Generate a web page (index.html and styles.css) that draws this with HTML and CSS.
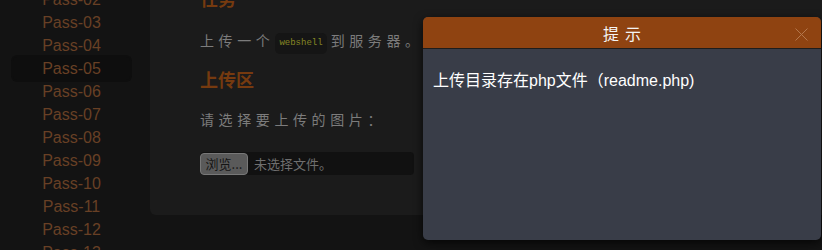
FILE: index.html
```html
<!DOCTYPE html>
<html lang="zh-CN">
<head>
<meta charset="utf-8">
<title>Upload</title>
<link rel="stylesheet" href="styles.css">
</head>
<body>
<div class="page">
  <ul class="menu">
    <li class="item">Pass-01</li>
    <li class="item">Pass-02</li>
    <li class="item">Pass-03</li>
    <li class="item">Pass-04</li>
    <li class="item active">Pass-05</li>
    <li class="item">Pass-06</li>
    <li class="item">Pass-07</li>
    <li class="item">Pass-08</li>
    <li class="item">Pass-09</li>
    <li class="item">Pass-10</li>
    <li class="item">Pass-11</li>
    <li class="item">Pass-12</li>
    <li class="item">Pass-13</li>
  </ul>
  <main class="panel">
    <h2 class="heading">任务</h2>
    <p class="text">上传一个<code class="code">webshell</code>到服务器。</p>
    <h2 class="heading second">上传区</h2>
    <p class="text lower">请选择要上传的图片：</p>
    <div class="file">
      <span class="file-btn">浏览...</span>
      <span class="file-name">未选择文件。</span>
    </div>
  </main>
</div>
<div class="dialog">
  <div class="dialog-head">
    <span class="dialog-title">提示</span>
    <svg class="dialog-close" width="13" height="13" viewBox="0 0 13 13"><path d="M0.5 0.5 L12.5 12.5 M12.5 0.5 L0.5 12.5" stroke="#b4774c" stroke-width="1" fill="none"/></svg>
  </div>
  <div class="dialog-body">上传目录存在php文件（readme.php)</div>
</div>
</body>
</html>
```
FILE: styles.css
```css
html, body {
  margin: 0;
  padding: 0;
  background: #131313;
  height: 250px;
  overflow: hidden;
  font-family: "Liberation Sans", "Noto Sans CJK SC", Arial, sans-serif;
}
.page {
  display: flex;
  align-items: flex-start;
}
.menu {
  list-style: none;
  margin: -35px 0 0 0;
  padding: 0;
  width: 150px;
  flex: none;
}
.item {
  width: 117px;
  margin-left: 13px;
  height: 23px;
  line-height: 23px;
  text-align: center;
  font-size: 16px;
  color: #684025;
  border-radius: 4px;
}
.item.active {
  background: #0e0e0e;
  box-shadow: 0 0 0 2px #0e0e0e;
}
.panel {
  margin-top: -14px;
  width: 700px;
  flex: none;
  background: #1b1b1b;
  border-radius: 0 0 0 6px;
  padding: 0 0 40px 50px;
  box-sizing: border-box;
}
.heading {
  margin: 0;
  font-size: 18px;
  line-height: 24px;
  font-weight: bold;
  color: #763a0f;
  font-family: "Noto Sans CJK SC", sans-serif;
}
.heading.second {
  margin-top: 13px;
}
.text {
  margin: 18px 0 0;
  font-size: 14px;
  line-height: 24px;
  letter-spacing: 4.6px;
  color: #7c7c7c;
  font-family: "Noto Sans CJK SC", sans-serif;
}
.text.lower {
  margin-top: 16px;
}
.code {
  display: inline-block;
  font-family: "Liberation Mono", monospace;
  font-size: 9px;
  letter-spacing: 0;
  line-height: 21px;
  padding: 0 4px;
  margin: 0 4px 0 1px;
  background: #151515;
  color: #868624;
  border-radius: 5px;
  vertical-align: 1px;
}
.file {
  margin-top: 21px;
  width: 214px;
  height: 23px;
  background: #111111;
  border-radius: 4px;
  display: flex;
  align-items: center;
  gap: 6px;
  font-family: "Noto Sans CJK SC", sans-serif;
  font-size: 13px;
}
.file-btn {
  box-sizing: border-box;
  height: 22px;
  width: 48px;
  line-height: 20px;
  text-align: center;
  background: #5a5a5a;
  border: 1px solid #787878;
  border-radius: 4px;
  color: #151515;
}
.file-name {
  color: #6f6f6f;
}
.dialog {
  position: absolute;
  left: 423px;
  top: 17px;
  width: 398px;
  height: 223px;
  background: #393d48;
  border-radius: 5px;
  box-shadow: 0 3px 10px rgba(0, 0, 0, 0.7);
  display: flex;
  flex-direction: column;
  overflow: hidden;
}
.dialog-head {
  height: 31px;
  flex: none;
  background: #8f4311;
  border-bottom: 1px solid #1d1d1d;
  display: flex;
  align-items: center;
  justify-content: center;
  position: relative;
}
.dialog-title {
  font-family: "Noto Sans CJK SC", sans-serif;
  font-size: 16px;
  letter-spacing: 6px;
  padding-left: 6px;
  color: #f4f4f4;
}
.dialog-close {
  position: absolute;
  right: 13px;
  top: 11px;
}
.dialog-body {
  padding: 20px 10px;
  font-size: 16px;
  line-height: 24px;
  color: #ffffff;
}
```
